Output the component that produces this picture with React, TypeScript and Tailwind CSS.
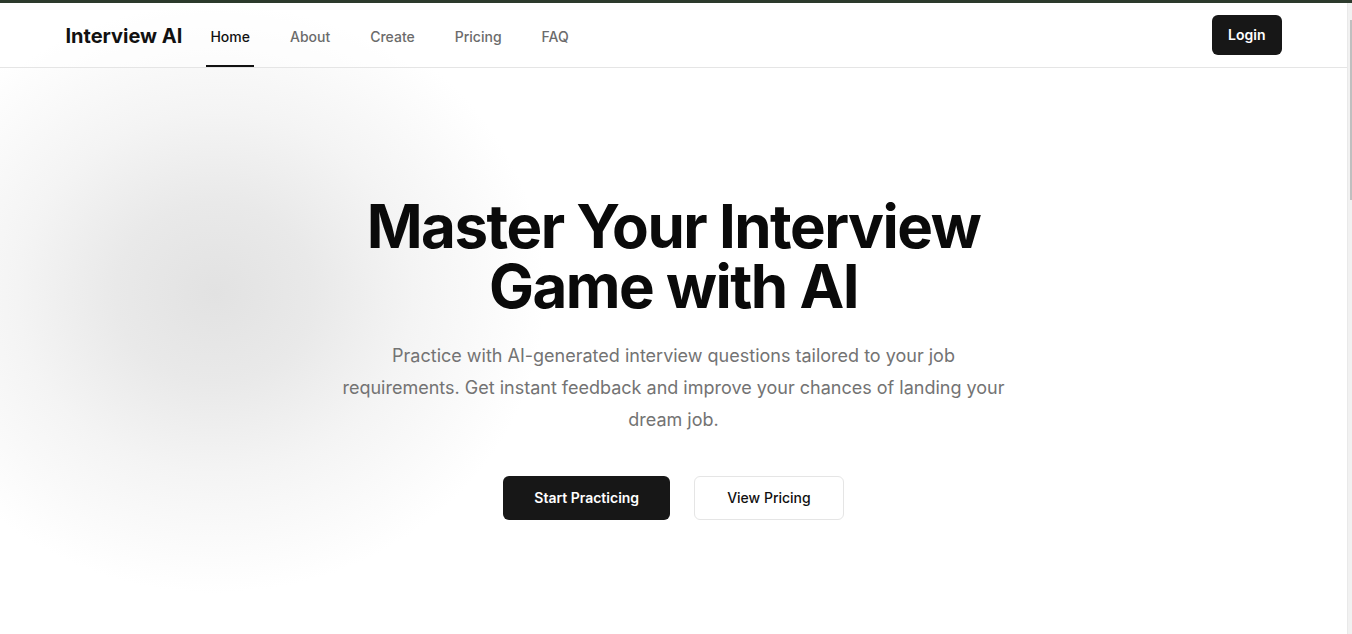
const navLinks = ["Home", "About", "Create", "Pricing", "FAQ"];

const Header = () => {
  return (
    <header className="relative z-10 border-b border-[#e5e5e5] bg-white/50">
      <div className="max-w-7xl mx-auto px-8 h-16 flex items-center justify-between">
        <div className="flex items-center h-full gap-6">
          <span className="pt-[2px] text-xl font-bold text-[#111]">Interview AI</span>
          <nav className="flex items-center h-full gap-8">
            {navLinks.map((link, i) => (
              <a
                key={link}
                href="#"
                className={
                  i === 0
                    ? "h-full flex items-center px-1 pt-[5px] border-b-2 border-[#111] text-sm font-medium text-[#111]"
                    : "h-full flex items-center px-1 pt-[5px] border-b-2 border-transparent text-sm font-medium text-[#6b6b6b]"
                }
              >
                {link}
              </a>
            ))}
          </nav>
        </div>
        <button className="h-10 px-4 rounded-md bg-[#171717] text-white text-sm font-semibold">
          Login
        </button>
      </div>
    </header>
  );
};

const Hero = () => {
  return (
    <section className="relative z-10 pt-[128px] px-8 flex flex-col items-center text-center">
      <h1 className="text-6xl leading-none font-bold tracking-tight text-[#0a0a0a]">
        Master Your Interview
        <br />
        Game with AI
      </h1>
      <p className="mt-6 max-w-2xl text-lg leading-8 text-[#737373]">
        Practice with AI-generated interview questions tailored to your job requirements. Get instant
        feedback and improve your chances of landing your dream job.
      </p>
      <div className="mt-10 flex gap-6">
        <button className="h-11 px-[31px] rounded-md bg-[#171717] text-white text-sm font-semibold">
          Start Practicing
        </button>
        <button className="h-11 px-8 rounded-md border border-[#e5e5e5] bg-white text-[#111] text-sm font-medium">
          View Pricing
        </button>
      </div>
    </section>
  );
};

export default function App() {
  return (
    <div className="h-[634px] overflow-hidden flex flex-col bg-white font-['Inter',sans-serif]">
      <div className="h-[3px] bg-[#2c3a2c]" />
      <div className="flex-1 flex min-h-0">
        <main className="relative flex-1 overflow-hidden bg-[radial-gradient(ellipse_330px_300px_at_215px_290px,#e2e2e2_0%,#e9e9e9_30%,#f4f4f4_60%,#ffffff_100%)]">
          <Header />
          <Hero />
        </main>
        <div className="w-[5px] bg-[#f1f1f1] border-l border-[#e9e9e9] pt-[17px] flex justify-end">
          <div className="w-[2px] h-[180px] bg-[#bfbfbf]" />
        </div>
      </div>
    </div>
  );
}
